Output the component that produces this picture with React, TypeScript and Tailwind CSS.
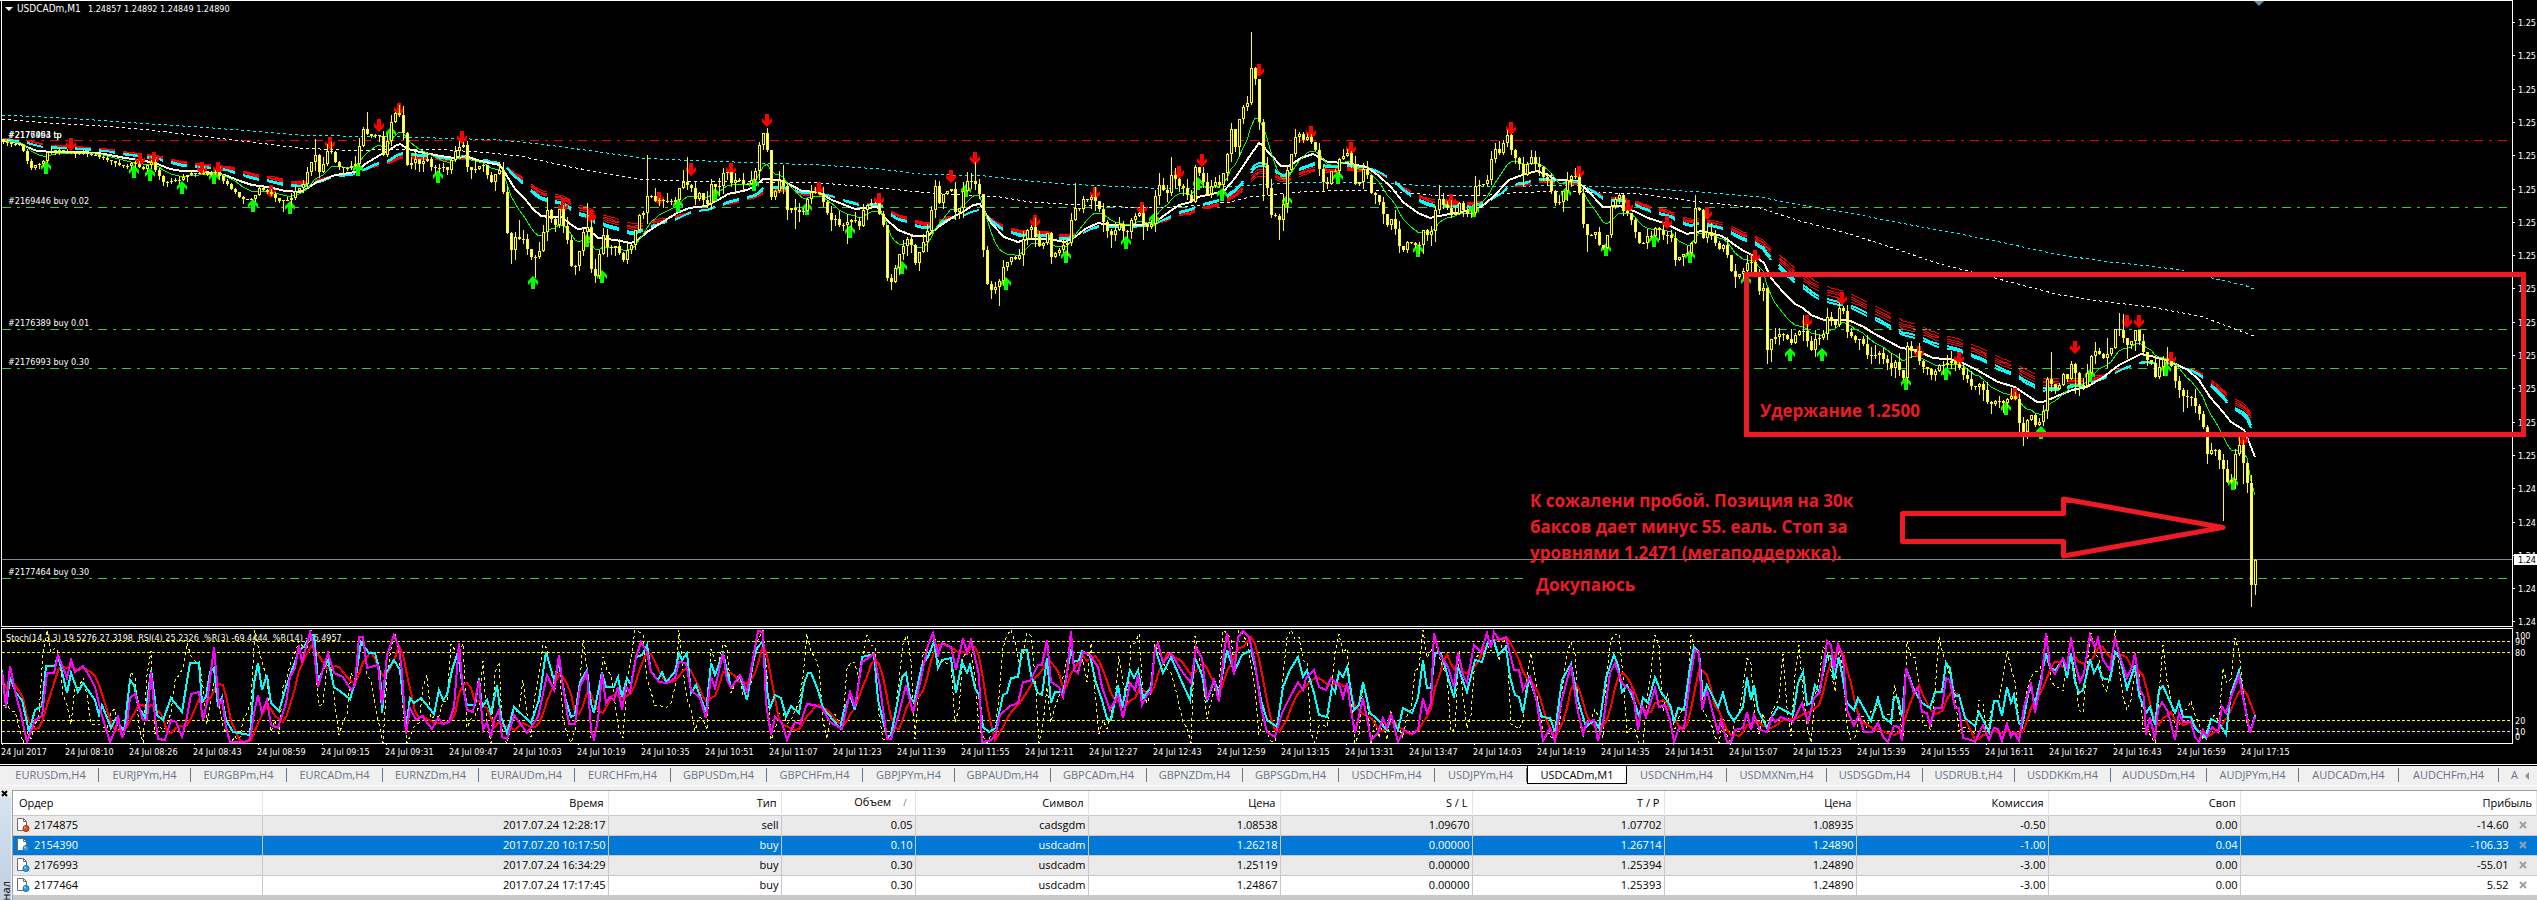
import { useMemo } from "react";
import clsx from "clsx";

type Point = [number, number];

interface Candle { x: number; open: number; close: number; high: number; low: number; }

const BAR_STEP = 4;
const BAR_COUNT = 564;
const FIRST_BAR = 3;

// Closing prices, in chart units
const CLOSES = `2,142 20,145 26,158 30,169 34,165 42,164 46,152 57,149 70,153 81,153 98,156 110,161 126,167 132,162 143,169 151,162 157,174 163,182
180,180 190,173 200,172 208,175 214,171 222,180 233,190 241,199 253,199 259,188 269,193 278,201 290,200 296,190 304,184 308,168 314,153 320,173
327,153 333,154 337,166 347,168 355,163 360,140 363,128 369,135 380,134 383,153 386,155 388,128 394,115 398,115 402,120 404,150 408,170 414,155
418,162 427,161 433,170 439,166 447,170 451,158 459,145 463,147 467,168 476,168 482,160 486,175 492,182 500,168 503,193 506,220 508,250 512,251
516,233 524,242 531,258 539,252 543,234 547,210 551,220 555,227 560,207 563,228 567,242 571,265 578,265 580,240 587,227 591,267 596,279 602,230
608,250 616,247 623,259 630,247 636,227 640,213 646,212 648,180 652,202 661,200 669,200 677,199 680,184 689,183 693,198 700,195 708,206 711,182
718,191 722,170 727,172 730,183 738,180 747,185 753,180 759,147 763,132 766,133 768,170 771,195 779,182 784,187 787,209 796,210 804,209 808,193
816,193 821,197 824,208 830,218 838,223 847,223 853,220 859,225 864,205 877,205 881,220 885,227 887,278 891,280 896,267 902,245 907,240 911,247
915,262 922,242 927,230 931,210 935,188 940,205 945,188 951,190 956,215 961,207 965,180 969,183 973,176 976,187 980,197 982,245 987,283 991,289
999,283 1003,267 1010,258 1018,256 1022,247 1025,228 1032,229 1038,245 1045,245 1048,225 1051,258 1059,249 1066,246 1070,233 1072,207 1077,213
1082,200 1089,198 1096,200 1102,223 1110,235 1119,223 1126,235 1132,218 1140,214 1144,230 1152,223 1155,195 1159,187 1167,193 1171,173 1177,181
1183,190 1191,202 1195,168 1202,177 1207,194 1216,182 1222,185 1223,175 1227,153 1231,128 1235,148 1239,117 1243,105 1248,105 1251,66 1255,80
1258,108 1262,160 1267,188 1271,213 1279,220 1282,218 1284,187 1287,170 1291,155 1294,140 1298,128 1302,143 1307,137 1313,145 1318,157 1320,180
1326,185 1331,170 1336,173 1339,160 1347,155 1350,160 1354,183 1359,184 1362,170 1367,174 1371,195 1381,202 1383,212 1388,225 1393,219 1397,240
1401,252 1409,241 1418,245 1422,240 1424,222 1427,235 1432,233 1436,204 1440,200 1447,207 1454,218 1460,197 1464,214 1473,210 1475,187 1485,185
1489,174 1492,148 1499,152 1505,137 1509,134 1511,152 1518,161 1524,175 1530,157 1536,163 1542,175 1550,187 1556,207 1562,192 1567,181 1574,172
1578,183 1582,217 1586,235 1595,234 1601,248 1606,243 1609,215 1613,200 1620,197 1624,213 1630,217 1635,233 1640,245 1648,237 1656,227 1662,233
1671,238 1675,258 1683,255 1689,252 1692,238 1695,208 1700,213 1703,240 1709,230 1716,245 1726,249 1730,273 1736,277 1744,272 1746,260 1754,265
1758,288 1764,290 1767,350 1771,340 1779,334 1787,338 1791,343 1799,332 1805,328 1807,343 1811,348 1816,337 1822,336 1827,318 1835,323 1840,305
1843,312 1847,333 1854,343 1860,338 1869,358 1877,352 1884,360 1890,368 1897,362 1903,380 1907,345 1914,352 1923,367 1931,373 1938,367 1948,360
1959,367 1966,378 1974,387 1981,383 1987,403 1996,400 2005,402 2009,397 2016,402 2020,427 2023,430 2028,415 2033,412 2036,430 2040,417 2045,405
2047,377 2052,388 2059,387 2064,373 2069,380 2072,353 2075,373 2079,387 2086,383 2089,360 2093,348 2102,357 2110,355 2115,328 2120,330 2127,347
2132,338 2136,330 2140,347 2146,360 2151,363 2156,383 2161,360 2169,360 2174,381 2182,393 2192,397 2199,413 2203,428 2207,455 2212,448 2218,455
2223,468 2227,482 2231,480 2234,455 2239,445 2243,463 2247,483 2251,585 2255,560`;

// Wicks that stick out of the usual range
const SPIKES = `314,139 366,112 459,141 510,263 518,220 533,277 547,197 587,203 647,155 682,170 686,157 782,165 794,228 846,243 830,230 974,162
998,305 1074,183 1170,157 1159,173 1251,32 1022,265 1142,239 1110,247 1279,239 1262,200 1439,185 1587,251 1475,176 1530,150 1694,195 1767,363
1771,361 1802,315 1831,312 1871,363 2022,445 2050,352 2075,393 2119,313 2123,314 2106,338 2126,358 2167,347 2183,411 2222,520 2207,463 2218,468
2251,606 2255,594 2242,483 1949,351`;

const WHITE_MA = `2,140 18,143 27,147 37,151 55,152 80,152 98,153 115,156 125,158 140,160 155,163 170,169 182,171 200,171 225,175 240,181 252,185
268,187 285,191 300,192 308,188 315,183 325,179 335,175 350,173 358,171 365,164 380,155 388,151 395,146 400,144 408,149 420,152 440,156 455,158
465,156 480,161 490,163 500,165 507,176 515,189 525,199 533,209 541,216 550,217 562,217 570,224 578,229 587,228 598,238 615,240 631,243 638,240
647,232 661,223 677,213 689,208 706,206 718,200 728,194 747,190 755,186 763,179 779,180 787,183 802,191 818,192 832,200 855,209 877,207 885,218
898,230 914,236 928,236 938,227 953,217 963,212 973,205 980,204 985,212 991,223 1004,237 1018,242 1028,239 1049,239 1065,242 1075,237 1085,229
1098,223 1110,225 1142,225 1155,222 1169,212 1179,205 1191,202 1198,197 1212,194 1224,191 1236,177 1249,157 1259,143 1262,145 1271,155 1281,166
1289,166 1301,158 1313,154 1328,162 1346,163 1367,167 1379,176 1391,187 1403,202 1418,213 1430,218 1444,215 1462,212 1481,207 1493,197 1509,180
1522,175 1537,171 1548,175 1556,180 1577,181 1587,190 1603,207 1620,206 1636,212 1648,218 1664,223 1687,234 1701,231 1722,236 1742,250 1756,257
1764,263 1771,278 1783,292 1795,304 1803,308 1811,315 1824,320 1848,320 1864,327 1873,333 1901,348 1916,350 1933,358 1957,360 1977,370 1998,382
2015,387 2037,402 2043,402 2072,390 2087,387 2102,378 2119,365 2141,354 2151,356 2171,362 2188,370 2199,380 2210,397 2223,412 2231,422 2244,430
2249,442 2255,457`;

const SLOW_CYAN = `2,115 80,119 150,124 200,127 250,131 300,135 340,136 400,137 470,139 500,140 540,144 600,152 640,158 680,160 760,163 820,165
880,169 920,174 985,176 1030,181 1065,184 1150,188 1200,188 1240,186 1290,183 1340,182 1400,184 1430,186 1500,187 1560,185 1640,188 1700,192
1760,197 1800,205 1850,213 1900,223 1950,232 2000,242 2060,255 2110,262 2150,266 2180,270 2220,280 2244,285 2254,289`;

const SLOW_WHITE = `2,119 50,123 100,126 150,130 200,136 250,142 300,148 340,150 370,150 430,149 480,152 520,156 570,167 610,174 640,179 680,181
760,182 820,183 870,187 920,192 960,195 1000,197 1030,202 1100,206 1150,208 1190,206 1230,202 1250,197 1300,192 1350,190 1390,191 1430,195
1480,196 1510,193 1560,191 1640,194 1700,202 1760,208 1800,221 1850,234 1890,247 1940,264 1980,274 2010,282 2060,295 2100,301 2150,307 2200,316
2254,336`;

const SELL_ARROWS = `71,138 140,153 154,152 202,162 218,162 271,185 330,137 379,119 399,103 462,131 563,200 591,210 659,192 691,163 731,163
767,114 819,182 879,193 951,170 975,152 1035,215 1095,187 1142,202 1179,166 1202,154 1259,64 1311,126 1351,142 1451,194 1511,122 1579,166
1628,200 1667,216 1707,207 1755,250 1807,315 1842,292 1919,346 1959,352 2015,388 2075,341 2127,315 2139,315 2171,352 2243,433`;

const BUY_ARROWS = `46,161 134,165 150,168 182,181 214,171 253,199 290,201 358,163 391,127 438,170 533,276 587,234 602,270 678,199 715,188
754,178 807,202 850,225 902,261 966,184 1006,277 1066,250 1126,236 1154,213 1198,177 1222,188 1287,195 1338,171 1418,244 1474,204 1566,187
1606,243 1654,234 1690,250 1746,275 1790,348 1822,348 1906,377 1946,367 2006,402 2041,426 2090,369 2166,363 2233,477`;

const STOCH = `2,672 6,707 10,666 16,695 20,710 27,742 35,720 42,716 47,673 54,673 58,655 67,678 71,660 75,672 83,666 90,677 95,687 101,712 110,742
116,728 118,715 122,738 127,723 130,698 135,694 143,720 147,720 151,672 155,717 158,739 165,740 171,720 176,722 182,737 187,717 191,694 199,692
203,720 207,703 214,647 219,705 222,700 226,727 230,742 243,742 250,740 254,713 258,695 262,713 267,700 271,725 278,728 286,703 290,677 295,668
299,645 302,663 310,632 313,643 318,687 322,673 328,653 334,673 343,677 351,690 355,685 359,637 363,637 367,668 378,665 382,705 387,655 394,635
399,647 402,672 406,734 410,708 416,720 422,716 432,729 438,718 443,724 449,722 454,707 459,643 462,680 467,710 473,712 479,680 483,730 487,722
491,738 494,720 499,710 502,737 507,739 514,715 527,733 538,717 547,675 554,690 559,655 563,687 569,724 575,724 580,687 587,672 591,730 594,739
598,720 602,673 606,703 610,697 614,700 618,687 622,710 626,687 630,692 636,657 641,642 647,652 651,672 659,682 667,683 675,678 679,662 686,663
691,690 700,698 706,718 711,677 715,688 723,653 727,680 731,688 740,675 747,692 751,670 758,631 763,632 766,703 771,735 775,717 782,723 787,740
795,722 800,724 807,704 814,705 822,708 830,722 842,729 850,692 855,707 862,662 874,654 880,687 887,739 891,739 898,717 906,685 913,713 920,683
928,645 933,633 938,655 942,643 951,647 956,670 963,638 967,653 971,640 979,675 982,742 989,741 995,737 1000,715 1010,706 1018,703 1023,682
1030,681 1038,665 1042,665 1047,640 1051,682 1059,687 1063,697 1067,675 1071,631 1074,670 1078,673 1083,652 1090,655 1098,667 1102,687 1110,710
1118,695 1123,718 1130,683 1135,690 1138,675 1142,705 1147,695 1151,692 1155,648 1158,643 1163,663 1171,653 1181,670 1191,683 1196,647 1202,658
1207,700 1214,680 1219,702 1224,653 1227,633 1234,675 1238,637 1243,631 1249,637 1255,663 1261,707 1267,732 1275,737 1282,713 1290,697 1298,682
1303,690 1306,678 1314,670 1319,687 1326,690 1331,678 1340,687 1343,698 1347,683 1351,710 1355,733 1363,698 1368,723 1371,740 1378,733 1383,718
1387,728 1391,713 1398,742 1404,730 1412,734 1418,730 1423,698 1427,713 1431,703 1434,633 1439,653 1448,667 1454,687 1458,652 1463,675 1467,683
1474,645 1481,652 1487,633 1491,648 1494,632 1499,640 1506,637 1509,650 1514,670 1519,670 1523,690 1530,677 1536,698 1543,741 1550,728 1555,741
1561,703 1571,665 1577,707 1583,734 1587,722 1594,720 1598,741 1604,717 1610,673 1615,663 1622,683 1633,693 1638,730 1642,705 1646,717 1655,688
1659,707 1665,705 1670,720 1674,742 1679,728 1684,728 1690,680 1695,650 1699,652 1702,710 1707,690 1712,710 1718,732 1721,720 1727,742 1731,742
1735,730 1743,728 1747,712 1751,730 1754,715 1760,730 1767,732 1772,717 1775,722 1781,717 1793,722 1802,703 1808,722 1814,698 1820,692 1827,641
1831,645 1834,670 1838,644 1843,657 1847,710 1854,726 1859,715 1864,732 1872,732 1878,723 1883,737 1888,742 1894,726 1899,727 1902,741 1906,668
1914,693 1918,688 1922,712 1927,713 1930,725 1935,708 1942,708 1946,678 1950,680 1955,708 1959,708 1963,738 1971,740 1975,742 1983,725 1989,740
1994,728 1998,729 2002,741 2007,724 2011,737 2014,732 2019,741 2024,707 2031,682 2035,713 2042,677 2046,633 2050,667 2055,674 2063,658 2067,668
2071,637 2075,663 2080,682 2084,673 2090,635 2095,648 2098,638 2103,660 2110,670 2115,637 2119,653 2127,678 2132,667 2135,653 2140,690 2144,697
2146,735 2150,717 2155,740 2158,710 2162,702 2168,712 2175,740 2179,713 2183,722 2191,722 2195,737 2199,742 2203,730 2207,737 2212,727 2218,732
2222,707 2226,713 2231,697 2239,676 2243,697 2250,733 2255,717`;

const RSI = `2,670 6,708 10,678 16,693 22,700 29,732 35,710 42,706 46,666 55,666 58,655 67,693 71,673 78,692 83,683 95,700 99,715 102,705 111,728
116,718 124,732 130,680 134,685 139,707 145,718 151,670 157,715 163,720 171,698 182,712 190,663 199,663 202,702 206,697 210,672 214,668 218,707
222,697 226,720 233,732 250,735 254,683 258,663 262,690 267,675 271,703 279,711 286,687 292,670 299,650 304,647 310,635 314,635 318,680 328,660
334,687 341,692 350,699 355,683 361,642 369,653 375,653 380,672 382,713 386,673 394,660 400,670 406,727 410,698 414,703 421,698 434,714 439,690
443,700 447,695 452,670 458,652 462,683 467,705 475,705 479,678 482,707 487,700 491,713 497,685 501,717 507,733 514,707 531,723 539,700 546,652
554,680 559,663 565,697 571,717 575,715 580,682 587,670 591,703 594,713 602,672 606,687 614,687 618,677 622,697 627,678 631,685 636,657 642,655
647,645 651,672 658,680 662,672 666,682 675,672 679,653 682,660 687,653 691,693 696,685 706,712 711,663 715,675 723,653 731,687 740,677 747,700
753,663 757,648 763,641 767,690 770,708 775,695 781,698 786,717 791,706 799,713 804,683 808,673 811,673 818,690 823,708 840,728 844,710 850,695
855,710 862,657 874,654 878,700 887,737 891,735 896,710 902,677 906,673 910,697 914,702 922,665 928,657 934,642 938,668 942,660 951,658 956,693
962,662 967,673 970,665 975,688 979,695 983,727 989,732 996,728 1003,695 1007,693 1011,678 1018,677 1022,650 1027,650 1031,675 1038,693 1042,695
1047,658 1051,703 1055,692 1063,692 1067,673 1071,650 1074,662 1079,660 1082,651 1090,656 1096,683 1102,700 1107,719 1111,720 1118,685 1122,708
1130,670 1134,678 1138,670 1143,698 1151,687 1155,648 1163,673 1171,657 1181,680 1190,700 1195,658 1202,675 1207,702 1214,680 1219,693 1227,650
1234,672 1242,655 1251,650 1255,667 1261,700 1267,720 1277,727 1283,687 1290,670 1298,657 1303,677 1307,670 1314,693 1319,715 1327,717 1332,687
1335,692 1339,672 1343,677 1347,667 1354,710 1359,705 1363,682 1370,713 1376,718 1387,730 1391,717 1398,730 1403,708 1412,713 1418,698 1423,660
1427,688 1431,688 1435,653 1441,653 1454,698 1458,667 1467,692 1475,660 1482,662 1488,642 1494,640 1498,655 1506,647 1510,677 1515,695 1519,697
1523,713 1529,678 1536,698 1542,717 1550,718 1555,732 1562,680 1571,664 1578,700 1586,727 1594,720 1599,728 1606,678 1614,655 1618,665 1622,692
1627,685 1635,703 1639,717 1643,698 1648,703 1655,677 1660,690 1671,707 1674,723 1678,708 1684,710 1690,667 1694,647 1699,652 1703,697 1707,685
1718,707 1723,693 1728,712 1734,721 1743,707 1747,677 1751,700 1754,685 1758,710 1767,728 1772,717 1778,707 1793,715 1798,683 1803,672 1807,705
1811,703 1815,685 1819,692 1827,656 1831,656 1834,680 1839,657 1847,703 1854,710 1858,698 1871,721 1878,698 1883,717 1891,723 1894,697 1898,698
1902,717 1906,668 1914,690 1922,703 1930,708 1935,692 1942,692 1946,663 1950,668 1954,697 1959,695 1965,718 1975,726 1979,712 1989,732 1994,701
1998,701 2002,716 2007,687 2011,703 2014,695 2019,723 2022,727 2030,685 2035,703 2041,678 2046,653 2050,668 2055,670 2063,660 2067,678 2071,653
2075,682 2079,693 2083,690 2090,659 2094,673 2098,665 2102,678 2110,680 2115,652 2120,658 2127,689 2135,665 2139,695 2146,713 2150,707 2155,725
2159,690 2163,686 2175,713 2179,702 2183,717 2191,717 2195,728 2206,738 2211,719 2219,723 2226,734 2231,693 2239,671 2243,695 2250,733 2255,715`;

const LEVELS = [
  { y: 207, label: "#2169446 buy 0.02" },
  { y: 329, label: "#2176389 buy 0.01" },
  { y: 368, label: "#2176993 buy 0.30" },
  { y: 578, label: "#2177464 buy 0.30" },
];

const TIMES = [
  "2017", "08:10", "08:26", "08:43", "08:59", "09:15", "09:31", "09:47", "10:03", "10:19", "10:35", "10:51",
  "11:07", "11:23", "11:39", "11:55", "12:11", "12:27", "12:43", "12:59", "13:15", "13:31", "13:47", "14:03",
  "14:19", "14:35", "14:51", "15:07", "15:23", "15:39", "15:55", "16:11", "16:27", "16:43", "16:59", "17:15",
];

const TABS: [string, string][] = [
  ["EURUSDm,H4", "w-24"], ["EURJPYm,H4", "w-23"], ["EURGBPm,H4", "w-24"], ["EURCADm,H4", "w-24"],
  ["EURNZDm,H4", "w-24"], ["EURAUDm,H4", "w-24"], ["EURCHFm,H4", "w-24"], ["GBPUSDm,H4", "w-24"],
  ["GBPCHFm,H4", "w-24"], ["GBPJPYm,H4", "w-23"], ["GBPAUDm,H4", "w-24"], ["GBPCADm,H4", "w-24"],
  ["GBPNZDm,H4", "w-24"], ["GBPSGDm,H4", "w-24"], ["USDCHFm,H4", "w-24"], ["USDJPYm,H4", "w-23"],
  ["USDCADm,M1", "w-25"], ["USDCNHm,H4", "w-25"], ["USDMXNm,H4", "w-25"], ["USDSGDm,H4", "w-24"],
  ["USDRUB.t,H4", "w-23"], ["USDDKKm,H4", "w-24"], ["AUDUSDm,H4", "w-24"], ["AUDJPYm,H4", "w-23"],
  ["AUDCADm,H4", "w-25"], ["AUDCHFm,H4", "w-25"],
];

const COLUMNS: [string, string][] = [
  ["Ордер", "w-[249px]"], ["Время", "w-[346px]"], ["Тип", "w-[173px]"], ["Объем", "w-[134px]"],
  ["Символ", "w-[173px]"], ["Цена", "w-48"], ["S / L", "w-48"], ["T / P", "w-48"],
  ["Цена", "w-48"], ["Комиссия", "w-48"], ["Своп", "w-48"], ["Прибыль", "w-auto"],
];

const ORDERS = [
  ["2174875", "2017.07.24 12:28:17", "sell", "0.05", "cadsgdm", "1.08538", "1.09670", "1.07702", "1.08935", "-0.50", "0.00", "-14.60"],
  ["2154390", "2017.07.20 10:17:50", "buy", "0.10", "usdcadm", "1.26218", "0.00000", "1.26714", "1.24890", "-1.00", "0.04", "-106.33"],
  ["2176993", "2017.07.24 16:34:29", "buy", "0.30", "usdcadm", "1.25119", "0.00000", "1.25394", "1.24890", "-3.00", "0.00", "-55.01"],
  ["2177464", "2017.07.24 17:17:45", "buy", "0.30", "usdcadm", "1.24867", "0.00000", "1.25393", "1.24890", "-3.00", "0.00", "5.52"],
];

function parse(data: string): Point[] {
  return data.trim().split(/\s+/).map((p) => p.split(",").map(Number) as Point);
}

// Samples a polyline once per bar
function resample(data: string): number[] {
  const pts = parse(data);
  const out: number[] = [];
  let k = 0;
  for (let i = 0; i < BAR_COUNT; i++) {
    const x = FIRST_BAR + i * BAR_STEP;
    while (k < pts.length - 2 && pts[k + 1][0] < x) k++;
    const [x0, y0] = pts[k];
    const [x1, y1] = pts[k + 1];
    const t = Math.min(1, Math.max(0, (x - x0) / (x1 - x0)));
    out.push(y0 + (y1 - y0) * t);
  }
  return out;
}

function noise(n: number) {
  const v = Math.sin(n * 127.1 + 11.7) * 43758.5453;
  return v - Math.floor(v);
}

function buildCandles(): Candle[] {
  const closes = resample(CLOSES).map((c, i) => {
    const amp = i < 70 ? 1 : i > 558 ? 0 : 5;
    return Math.round(c + (noise(i) - 0.5) * amp);
  });
  const candles = closes.map((close, i) => {
    const open = i ? closes[i - 1] : close - 2;
    const reach = i < 70 ? 4 : 10;
    return {
      x: FIRST_BAR + i * BAR_STEP,
      open,
      close,
      high: Math.round(Math.min(open, close) - noise(i + 900) ** 2 * reach),
      low: Math.round(Math.max(open, close) + noise(i + 1900) ** 2 * reach),
    };
  });
  for (const [x, y] of parse(SPIKES)) {
    const c = candles[Math.min(BAR_COUNT - 1, Math.round((x - FIRST_BAR) / BAR_STEP))];
    if (y < c.high) c.high = y;
    if (y > c.low) c.low = y;
  }
  return candles;
}

function ema(values: number[], alpha: number, start: number): number[] {
  let prev = start;
  return values.map((v) => (prev += alpha * (v - prev)));
}

function toPoints(values: number[]) {
  return values.map((v, i) => `${FIRST_BAR + i * BAR_STEP},${Math.round(v)}`).join(" ");
}

// Four bars on, two bars off, so that neighbouring lines break together
function toDashes(values: number[]) {
  let d = "";
  values.forEach((v, i) => {
    const step = i % 6;
    if (step > 4) return;
    d += `${step === 0 ? "M" : "L"}${FIRST_BAR + i * BAR_STEP} ${Math.round(v)}`;
  });
  return d;
}

function Arrows({ data, up }: { data: string; up?: boolean }) {
  const shape = up
    ? "l-5 5v4l3 -3v7h4v-7l3 3v-4z"
    : "m-2 0v7l-3 -3v4l5 5l5 -5v-4l-3 3v-7z";
  return (
    <path
      fill={up ? "#00ff00" : "#ff0000"}
      d={parse(data).map(([x, y]) => `M${x} ${y}${shape}`).join("")}
    />
  );
}

function PriceChart({ candles }: { candles: Candle[] }) {
  const closes = candles.map((c) => c.close);
  return (
    <svg viewBox="0 0 2537 627" className="block h-auto w-full bg-black font-['DejaVu_Sans_Condensed','DejaVu_Sans',sans-serif] text-[9px]" role="img" aria-label="USDCADm,M1">
      <g shapeRendering="crispEdges" fill="none">
        {/* Order levels */}
        <path d="M2 140.5H2510" stroke="#ff0000" strokeDasharray="9 6 3 6" />
        {LEVELS.map(({ y }) => (
          <path key={y} d={y === 578 ? "M2 578.5H1524M1826 578.5H2510" : `M2 ${y}.5H2510`} stroke="#32cd32" strokeDasharray="9 6 3 6" />
        ))}
        <path d="M2 559.5H2512" stroke="#778899" />

        {/* Moving averages */}
        <polyline points={SLOW_CYAN} stroke="#00ffff" strokeDasharray="3 3" />
        <polyline points={SLOW_WHITE} stroke="#fff" strokeDasharray="3 3" />
        {[0.048, 0.045, 0.043, 0.04].map((a) => (
          <path key={a} d={toDashes(ema(closes, a, 138))} stroke="#ff0000" />
        ))}
        {[0.057, 0.053].map((a) => (
          <path key={a} d={toDashes(ema(closes, a, 140))} stroke="#00ffff" strokeWidth="2" />
        ))}
        <polyline points={WHITE_MA} stroke="#fffbe6" strokeWidth="2" />
        <polyline points={toPoints(ema(closes, 0.18, 140))} stroke="#00ff00" />
      </g>

      <Arrows data={SELL_ARROWS} />
      <Arrows data={BUY_ARROWS} up />

      {/* Candles */}
      <g shapeRendering="crispEdges">
        {candles.map((c) => {
          const top = Math.min(c.open, c.close);
          const height = Math.max(1, Math.abs(c.open - c.close));
          return (
            <g key={c.x}>
              <rect x={c.x} y={c.high} width="1" height={c.low - c.high + 1} fill="#ffff00" />
              <rect x={c.x - 1} y={top} width="3" height={height} fill="#ffff00" />
              {height > 2 && (
                <rect x={c.x} y={top + 1} width="1" height={height - 2} fill={c.close > c.open ? "#fff" : "#000"} />
              )}
            </g>
          );
        })}
      </g>

      {/* Frame and price scale */}
      <g shapeRendering="crispEdges" fill="none" stroke="#fff">
        <path d="M0 .5H2512M1.5 0V627M2512.5 0V627M1 626.5H2512" />
        {Array.from({ length: 19 }, (_, i) => (
          <path key={i} d={`M2513 ${Math.round(22 + i * 33.3)}.5h2`} />
        ))}
      </g>
      <g fill="#fff">
        {Array.from({ length: 19 }, (_, i) => (
          <text key={i} x="2518" y={Math.round(26 + i * 33.3)}>{i < 14 ? "1.25" : "1.24"}</text>
        ))}
      </g>
      <rect x="2514" y="554" width="23" height="11" fill="#fff" />
      <text x="2518" y="563" fill="#000">1.24</text>
      <path d="M2254 1h10l-5 5z" fill="#778899" />

      <g fill="#fff">
        <path d="M5 7h8l-4 4z" />
        <text x="17" y="12" className="text-[10px]">USDCADm,M1</text>
        <text x="88" y="12">1.24857 1.24892 1.24849 1.24890</text>
        <text x="8" y="138">#2176993 tp</text>
        <text x="8" y="138">#2177464 tp</text>
        {LEVELS.map(({ y, label }) => (
          <text key={y} x="8" y={y - 3}>{label}</text>
        ))}
      </g>

      {/* Trader's notes */}
      <g fill="none" stroke="#ed1c24" strokeWidth="5">
        <rect x="1746.5" y="274.5" width="777" height="160" />
        <path d="M1902.5 513.5H2063.5V499L2223 527.5L2063.5 556V541.5H1902.5Z" strokeLinejoin="round" />
      </g>
      <g fill="#ed1c24" className="font-['Open_Sans','Noto_Sans',sans-serif] text-[17px] font-bold">
        <text x="1760" y="417">Удержание 1.2500</text>
        <text x="1530" y="507">К сожалени пробой. Позиция на 30к</text>
        <text x="1530" y="533">баксов дает минус 55. еаль. Стоп за</text>
        <text x="1530" y="559">уровнями 1.2471 (мегаподдержка).</text>
        <text x="1536" y="591">Докупаюсь</text>
      </g>
    </svg>
  );
}

function Oscillators({ candles }: { candles: Candle[] }) {
  const stoch = resample(STOCH);
  const signal = stoch.map((_, i) => {
    const part = stoch.slice(Math.max(0, i - 3), i + 1);
    return part.reduce((a, b) => a + b, 0) / part.length;
  });
  const fast = candles.map((c, i) => {
    const part = candles.slice(Math.max(0, i - 3), i + 1);
    const high = Math.min(...part.map((p) => p.high));
    const low = Math.max(...part.map((p) => p.low));
    return 630 + ((c.close - high) / Math.max(1, low - high)) * 113;
  });
  const scale: [number, string][] = [[639, "100"], [645, "90"], [656, "80"], [724, "20"], [735, "10"], [740, "0"]];
  return (
    <svg viewBox="0 627 2537 118" className="block h-auto w-full bg-black font-['DejaVu_Sans_Condensed','DejaVu_Sans',sans-serif] text-[9px]" role="img" aria-label="Stoch, RSI, %R">
      <text x="6" y="641" fill="#fff" className="whitespace-pre">
        {"Stoch(14,3,3) 19.5276 27.3198  RSI(4) 25.2326  %R(3) -69.4444  %R(14) -76.4957"}
      </text>
      <g shapeRendering="crispEdges" fill="none">
        <path d="M2 641.5H2512M2 652.5H2512M2 720.5H2512M2 731.5H2512" stroke="#ffff00" strokeDasharray="3 2" />
        <polyline points={toPoints(fast)} stroke="#ffff00" strokeDasharray="3 3" />
        <polyline points={toPoints(signal)} stroke="#ff0000" strokeWidth="2" />
        <polyline points={RSI} stroke="#00ffff" strokeWidth="2" />
        <polyline points={STOCH} stroke="#ff00ff" strokeWidth="2" />
        <path d="M1 628.5H2512M1.5 628V744M2512.5 628V744M1 743.5H2513" stroke="#fff" />
        {TIMES.map((t, i) => <path key={t} d={`M${2 + i * 64}.5 743v2`} stroke="#fff" />)}
      </g>
      <g fill="#fff">
        {scale.map(([y, t]) => <text key={t} x="2515" y={y}>{t}</text>)}
      </g>
    </svg>
  );
}

function OrderIcon({ sell }: { sell: boolean }) {
  return (
    <svg width="15" height="16" viewBox="0 0 15 16" className="shrink-0" aria-hidden="true">
      <path d="M2.5 1.5h6l3 3v9h-9z" fill="#fff" stroke="#6b6b6b" strokeLinejoin="round" />
      <path d="M8.5 1.5v3h3" fill="none" stroke="#6b6b6b" />
      <circle cx="11" cy="11.5" r="3" fill={sell ? "#e8481c" : "#2a9be8"} stroke={sell ? "#a52f0c" : "#1270b0"} />
      <circle cx="10" cy="10.5" r="1" fill={sell ? "#ffa184" : "#9ad6ff"} />
    </svg>
  );
}

function Terminal() {
  return (
    <section className="flex min-h-0 flex-1 overflow-hidden" aria-label="Терминал">
      <div className="flex w-3 shrink-0 flex-col overflow-hidden bg-[#f0f0f0]">
        <button aria-label="Закрыть" className="flex h-[14px] w-2 items-center justify-center">
          <svg width="7" height="7" viewBox="0 0 7 7"><path d="M1 1l5 5M6 1l-5 5" stroke="#000" strokeWidth="2" /></svg>
        </button>
        <div className="w-[11px] flex-1 bg-linear-to-b from-[#d5e3f2] to-[#b9c9dc] pt-[84px]">
          <span className="block rotate-180 text-[11px] leading-[11px] whitespace-nowrap [writing-mode:vertical-rl]">Терминал</span>
        </div>
      </div>
      <div className="min-w-0 flex-1 overflow-hidden border-t border-l border-[#a0a0a0] bg-[#c8c8c8]">
        <table className="w-full table-fixed border-collapse bg-white text-[11px] leading-4 text-black">
          <thead>
            <tr className="h-6 border-b border-[#c8c8c8]">
              {COLUMNS.map(([name, width], i) => (
                <th key={i} scope="col" className={clsx("border-r border-[#e5e5e5] p-0 font-normal", width, i ? "pr-1 text-right" : "pl-1.5 text-left")}>
                  {name}
                  {name === "Объем" && <span className="mr-1 ml-3 text-[9px] text-gray-500">/</span>}
                </th>
              ))}
            </tr>
          </thead>
          <tbody>
            {ORDERS.map((row, r) => (
              <tr key={row[0]} className={clsx("h-5 border-b border-[#c8c8c8]", r === 1 ? "bg-[#0078d7] text-white" : r % 2 ? "bg-white" : "bg-[#eaeaea]")}>
                {row.map((cell, i) => (
                  <td key={i} className={clsx("p-0", i < 11 && "border-r border-[#c8c8c8]", i && "pr-0.5 text-right")}>
                    {i === 0 ? (
                      <span className="flex items-center gap-1 pl-0.5"><OrderIcon sell={row[2] === "sell"} />{cell}</span>
                    ) : i === 11 ? (
                      <span className="flex items-center justify-end gap-2 pr-1.5">
                        {cell}
                        <button aria-label={`Закрыть ${row[0]}`} className="p-0.5">
                          <svg width="8" height="8" viewBox="0 0 8 8"><path d="M1 1l6 6M7 1l-6 6" stroke="#a0a0a0" strokeWidth="2" /></svg>
                        </button>
                      </span>
                    ) : cell}
                  </td>
                ))}
              </tr>
            ))}
          </tbody>
        </table>
      </div>
    </section>
  );
}

export default function App() {
  const candles = useMemo(buildCandles, []);
  return (
    <main className="flex h-screen flex-col overflow-hidden bg-[#f0f0f0] font-['Open_Sans','Noto_Sans',sans-serif]">
      <PriceChart candles={candles} />
      <Oscillators candles={candles} />
      <div className="flex h-5 shrink-0 overflow-hidden border-b border-white bg-black pl-px font-['DejaVu_Sans_Condensed','DejaVu_Sans',sans-serif] text-[9px] leading-[14px] text-white">
        {TIMES.map((t) => <span key={t} className="w-16 shrink-0 whitespace-nowrap">24 Jul {t}</span>)}
      </div>
      <nav className="flex h-[21px] shrink-0 overflow-hidden border-t border-t-black border-b border-b-white pl-[3px] text-[11px] leading-4">
        {TABS.map(([name, width]) => {
          const active = name.endsWith("M1");
          return (
            <button key={name} className={clsx("shrink-0 text-center", width, active ? "-mt-px h-[19px] border border-black bg-white text-black" : "mt-0.5 h-[14px] border-r border-gray-500 leading-3 text-gray-500")}>
              {name}
            </button>
          );
        })}
        <button className="mt-0.5 h-[14px] shrink-0 pl-3 leading-3 text-gray-500">A</button>
        <button aria-label="Назад" className="ml-1.5 shrink-0">
          <svg width="6" height="8" viewBox="0 0 6 8"><path d="M5 0v8L1 4z" fill="#909090" /></svg>
        </button>
      </nav>
      <div className="h-1 shrink-0" />
      <Terminal />
    </main>
  );
}
